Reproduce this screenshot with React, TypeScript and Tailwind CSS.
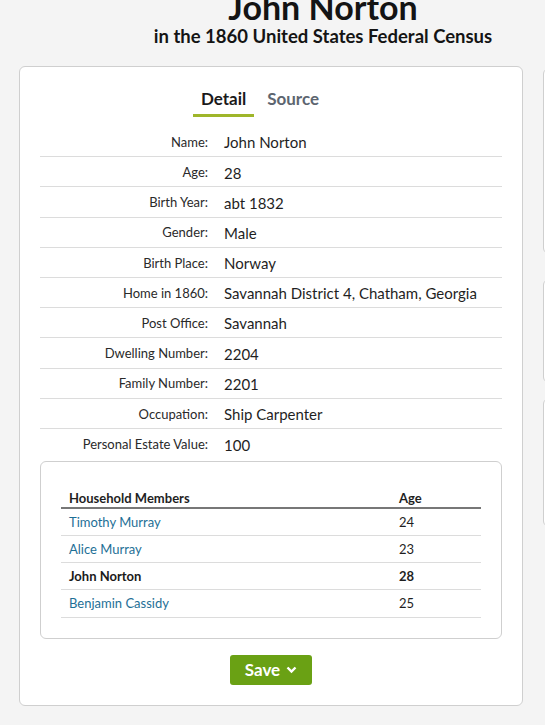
import React from "react";

const rows: [string, string][] = [
  ["Name", "John Norton"],
  ["Age", "28"],
  ["Birth Year", "abt 1832"],
  ["Gender", "Male"],
  ["Birth Place", "Norway"],
  ["Home in 1860", "Savannah District 4, Chatham, Georgia"],
  ["Post Office", "Savannah"],
  ["Dwelling Number", "2204"],
  ["Family Number", "2201"],
  ["Occupation", "Ship Carpenter"],
  ["Personal Estate Value", "100"],
];

const members: { name: string; age: string; self?: boolean }[] = [
  { name: "Timothy Murray", age: "24" },
  { name: "Alice Murray", age: "23" },
  { name: "John Norton", age: "28", self: true },
  { name: "Benjamin Cassidy", age: "25" },
];

export default function App() {
  return (
    <div className="h-[725px] w-[545px] overflow-hidden bg-[#f4f4f4] font-['Lato',sans-serif] text-[#1f1f1f]">
      <div className="-mt-[11px] pl-[101px] text-center">
        <h1 className="text-[34px] font-bold leading-[36px] text-[#141414]">John Norton</h1>
        <h2 className="text-[18.5px] font-bold leading-[22px] text-[#141414]">
          in the 1860 United States Federal Census
        </h2>
      </div>
      <div className="mt-[19px] flex gap-[20px] pl-[19px]">
        <div className="w-[504px] shrink-0 rounded-[6px] border border-[#cfcfcf] bg-white px-[20px] pb-[20px] pt-[17px]">
          <div className="flex justify-center pr-[22px]">
            <div className="border-b-[3px] border-[#9fb62a] px-[8px] pb-[3px] pt-[3px] text-[17px] font-bold leading-[24px] text-[#1a1a1a]">
              Detail
            </div>
            <div className="ml-[5px] px-[8px] pb-[3px] pt-[3px] text-[17px] font-bold leading-[24px] text-[#5d6570]">
              Source
            </div>
          </div>
          <div className="mt-[10px]">
            {rows.map(([label, value], i) => (
              <div
                key={label}
                className={
                  "flex h-[30.2px] items-center " +
                  (i < rows.length - 1 ? "border-b border-[#dcdcdc]" : "")
                }
              >
                <div className="w-[168px] shrink-0 pt-[2px] text-right text-[13px] text-[#2a2a2a]">{label}:</div>
                <div className="pl-[16px] pt-[2px] text-[15px] text-[#1f1f1f]">{value}</div>
              </div>
            ))}
          </div>
          <div className="mt-[2px] rounded-[6px] border border-[#cfcfcf] px-[20px] pb-[20px] pt-[19px]">
            <table className="w-full border-collapse text-[13px]">
              <thead>
                <tr className="border-b-2 border-[#777]">
                  <th className="h-[27px] pb-[2px] pl-[8px] pt-[9px] text-left font-bold leading-[14px]">Household Members</th>
                  <th className="w-[90px] pb-[2px] pl-[8px] pt-[9px] text-left font-bold leading-[14px]">Age</th>
                </tr>
              </thead>
              <tbody>
                {members.map((m) => (
                  <tr key={m.name} className="border-b border-[#dcdcdc]">
                    <td className="h-[27.3px] pl-[8px] pt-[1px] align-middle">
                      {m.self ? (
                        <span className="font-bold text-[#1a1a1a]">{m.name}</span>
                      ) : (
                        <span className="text-[#1e6f96]">{m.name}</span>
                      )}
                    </td>
                    <td className={"pl-[8px] pt-[1px] align-middle " + (m.self ? "font-bold" : "")}>{m.age}</td>
                  </tr>
                ))}
              </tbody>
            </table>
          </div>
          <div className="mt-[16px] flex justify-center">
            <button className="flex h-[30px] w-[82px] items-center justify-center gap-[6px] rounded-[3px] bg-[#6aa114] text-[17px] font-bold text-white">
              Save
              <svg width="11" height="8" viewBox="0 0 11 8" fill="none">
                <path d="M1.5 1.5 L5.5 5.5 L9.5 1.5" stroke="white" strokeWidth="2.4" />
              </svg>
            </button>
          </div>
        </div>
        <div className="mt-[2px] flex w-[200px] shrink-0 flex-col">
          <div className="h-[186px] rounded-[6px] border border-[#cfcfcf] bg-white" />
          <div className="mt-[25px] h-[104px] rounded-[6px] border border-[#cfcfcf] bg-white" />
          <div className="mt-[15px] h-[129px] rounded-[6px] border border-[#cfcfcf] bg-white" />
        </div>
      </div>
    </div>
  );
}
